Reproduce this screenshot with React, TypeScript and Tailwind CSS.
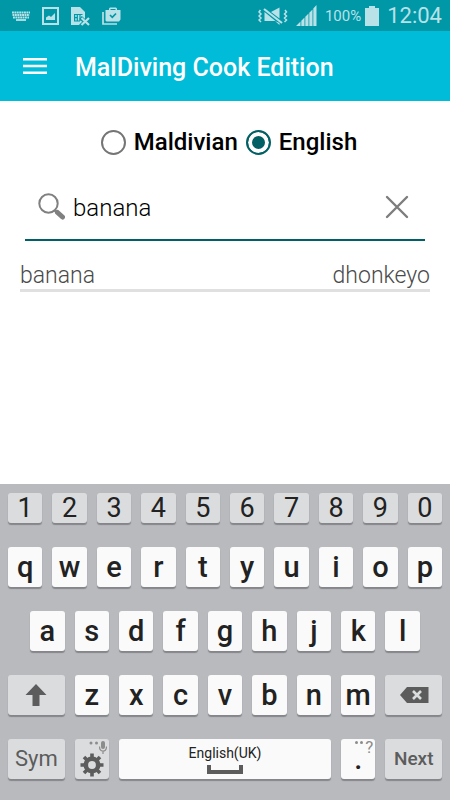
import React, { useState } from 'react';

type Language = 'maldivian' | 'english';

const DICTIONARY = [{ english: 'banana', maldivian: 'dhonkeyo' }];

const LANGUAGES: { id: Language; label: string }[] = [
  { id: 'maldivian', label: 'Maldivian' },
  { id: 'english', label: 'English' },
];

const NUMBER_KEYS = ['1', '2', '3', '4', '5', '6', '7', '8', '9', '0'];
const TOP_KEYS = ['q', 'w', 'e', 'r', 't', 'y', 'u', 'i', 'o', 'p'];
const HOME_KEYS = ['a', 's', 'd', 'f', 'g', 'h', 'j', 'k', 'l'];
const BOTTOM_KEYS = ['z', 'x', 'c', 'v', 'b', 'n', 'm'];

const StatusBar: React.FC = () => (
  <div className="flex h-[31px] items-center justify-between bg-[#0097a7] pl-3 pr-2 text-[#b8e2e7]">
    <div className="flex items-center gap-3">
      {/* Keyboard */}
      <svg className="h-[10px] w-[18px]" viewBox="0 0 18 10" fill="none" stroke="currentColor">
        <path d="M0 1.500h18M0.500 4h17M1 6.500h16" strokeWidth="1.900" strokeDasharray="1.900 0.500" />
        <path d="M4 9h10" strokeWidth="1.800" />
      </svg>
      {/* Screenshot */}
      <svg className="h-[18px] w-[17px]" viewBox="0 0 17 18">
        <path fill="currentColor" fillRule="evenodd" d="M0 0h17v18H0zM2 2v14h13V2z" />
        <path fill="currentColor" d="M4 13V10.500l3-2 2 1.500 4-4v7z" />
      </svg>
      {/* SIM missing */}
      <svg className="h-[20px] w-[19px]" viewBox="0 0 19 20">
        <path fill="currentColor" d="M0 1h9l5 5v13H0z" />
        <path fill="none" stroke="#0097a7" strokeWidth="1.200" d="M3 8.500h8.500M3.600 8v7.500M3 15h6M6.300 8v7M9 8v7M3 11.700h3" />
        <path fill="none" stroke="#0097a7" strokeWidth="4" d="M9.500 11.500l9 8.500M19 11.500l-9.500 8.500" />
        <path fill="none" stroke="currentColor" strokeWidth="2.200" d="M10.500 12l7.500 7M18 12l-7.500 7" />
      </svg>
      {/* Installed apps */}
      <svg className="h-[18px] w-[19px]" viewBox="0 0 19 18">
        <path fill="none" stroke="currentColor" strokeWidth="1.700" d="M1 5v12h14" />
        <path fill="currentColor" fillRule="evenodd" d="M3.500 3H7V1.500L8 .5h6l1 1V3h3.500v9.500l-1.500 2H4.500l-1-1zM8.500 2v1h5V2z" />
        <path fill="none" stroke="#0097a7" strokeWidth="1.700" d="M8 8l2.300 2.300L14 6.500" />
      </svg>
    </div>
    <div className="flex items-center">
      {/* Sound muted, vibrating */}
      <svg className="mr-2 h-[20px] w-[30px]" viewBox="0 0 30 20" fill="none" stroke="currentColor">
        <path d="M2.500 4L1 6l2 2-2 2 2 2-2 2 2 2M27 4l1.500 2-2 2 2 2-2 2 2 2-2 2" strokeWidth="1.500" />
        <path fill="currentColor" stroke="none" d="M6.500 6l11 9h-11zM13 6L21.500 1.500v11zM17 15l4.500 4V17z" />
        <path d="M6 3l18 14" strokeWidth="2.200" />
      </svg>
      {/* Signal */}
      <svg className="mr-2 h-[21px] w-[21px]" viewBox="0 0 21 21" fill="currentColor">
        <path d="M0 21l4.500-4.500V21zM5.300 15.700l3.200-3.200V21H5.300zM9.300 11.700l3.200-3.200V21H9.300zM13.300 7.700l3.200-3.200V21h-3.200zM17.300 3.500L20.500 0v21h-3.200z" />
      </svg>
      <span className="text-[15px] leading-5">100%</span>
      <svg className="ml-1 h-[20px] w-[14px]" viewBox="0 0 14 20" fill="currentColor">
        <path d="M4 0h6v2h4v18H0V2h4z" />
      </svg>
      <span className="ml-2 text-[22px] leading-7">12:04</span>
    </div>
  </div>
);

interface KeyProps {
  label: string;
  className?: string;
  children?: React.ReactNode;
  onPress?: () => void;
}

const Key: React.FC<KeyProps> = ({ label, className = 'col-span-2 h-10 bg-[#fafafa] text-[29px] font-medium', children, onPress }) => (
  <button
    type="button"
    aria-label={label}
    onClick={onPress}
    className={`relative flex items-center justify-center rounded-[3px] leading-8 text-[#222] shadow-[0_2px_1px_#85868a] active:brightness-90 ${className}`}
  >
    {children ?? label}
  </button>
);

interface KeyboardProps {
  onType: (char: string) => void;
  onDelete: () => void;
}

const Keyboard: React.FC<KeyboardProps> = ({ onType, onDelete }) => (
  <div className="mt-auto flex flex-col gap-6 bg-[#b9babe] px-2 pb-[21px] pt-[9px]">
    <div className="grid grid-cols-20 gap-[10px]">
      {NUMBER_KEYS.map(key => (
        <Key key={key} label={key} onPress={() => onType(key)} className="col-span-2 h-[30px] bg-[#dbdcde] text-[27px]" />
      ))}
    </div>
    <div className="grid grid-cols-20 gap-[10px]">
      {TOP_KEYS.map(key => (
        <Key key={key} label={key} onPress={() => onType(key)} />
      ))}
    </div>
    <div className="grid grid-cols-20 gap-[10px]">
      {/* Half a key in from the edge */}
      <span />
      {HOME_KEYS.map(key => (
        <Key key={key} label={key} onPress={() => onType(key)} />
      ))}
    </div>
    <div className="grid grid-cols-20 gap-[10px]">
      <Key label="Shift" className="col-span-3 h-10 bg-[#dbdcde]">
        <svg className="h-6 w-[22px]" viewBox="0 0 22 24" fill="#5c5c5c">
          <path d="M11 1l10.500 11h-7v11h-7V12h-7z" />
        </svg>
      </Key>
      {BOTTOM_KEYS.map(key => (
        <Key key={key} label={key} onPress={() => onType(key)} />
      ))}
      <Key label="Delete" onPress={onDelete} className="col-span-3 h-10 bg-[#dbdcde]">
        <svg className="h-4 w-[30px]" viewBox="0 0 30 16">
          <path fill="#5c5c5c" d="M1 8l7-8h21.500v16H8z" />
          <path fill="none" stroke="#dbdcde" strokeWidth="2.600" d="M14 4l8 8M22 4l-8 8" />
        </svg>
      </Key>
    </div>
    <div className="grid grid-cols-20 gap-[10px]">
      <Key label="Sym" className="col-span-3 h-10 bg-[#dbdcde]">
        <span className="text-[22px] text-[#5c5c5c]">Sym</span>
      </Key>
      <Key label="Settings" className="col-span-2 h-10 bg-[#dbdcde]">
        <svg className="absolute right-[2px] top-[2px] h-[13px] w-[18px]" viewBox="0 0 18 13">
          <circle cx="2" cy="2" r="1.500" fill="#8c8c8c" />
          <circle cx="7.500" cy="2" r="1.500" fill="#8c8c8c" />
          <rect x="12" y="0" width="4" height="8" rx="2" fill="#8c8c8c" />
          <path d="M10.500 5.500c0 6 7 6 7 0M14 10v3" fill="none" stroke="#8c8c8c" strokeWidth="1.200" />
        </svg>
        <svg className="mt-3 h-6 w-6" viewBox="-12 -12 24 24">
          <circle r="6.200" fill="none" stroke="#5c5c5c" strokeWidth="4.600" />
          <path
            d="M0-11.500v4M0 11.500v-4M-11.500 0h4M11.500 0h-4M-8-8l3 3M8 8l-3-3M8-8l-3 3M-8 8l3-3"
            fill="none"
            stroke="#5c5c5c"
            strokeWidth="3.600"
          />
        </svg>
      </Key>
      <Key label="Space" onPress={() => onType(' ')} className="col-span-10 h-10 flex-col bg-[#fafafa]">
        <span className="text-[14px] leading-4">English(UK)</span>
        <svg className="mt-1 h-[9px] w-9" viewBox="0 0 36 9">
          <path d="M2 0v7h32V0" fill="none" stroke="#5c5c5c" strokeWidth="4" />
        </svg>
      </Key>
      <Key label="Full stop" onPress={() => onType('.')} className="col-span-2 h-10 bg-[#fafafa] text-[29px] font-medium">
        <span className="absolute right-[2px] top-0 flex items-start gap-[2px] text-[17px] font-normal leading-4 text-[#8c8c8c]">
          <span className="mt-[2px] h-[3px] w-[3px] rounded-full bg-[#8c8c8c]" />
          <span className="mt-[2px] h-[3px] w-[3px] rounded-full bg-[#8c8c8c]" />
          <span>?</span>
        </span>
        <span>.</span>
      </Key>
      <Key label="Next" className="col-span-3 h-10 bg-[#dbdcde]">
        <span className="text-[19px] font-medium text-[#5c5c5c]">Next</span>
      </Key>
    </div>
  </div>
);

export default function App() {
  const [language, setLanguage] = useState<Language>('english');
  const [query, setQuery] = useState('banana');

  const results = query ? DICTIONARY.filter(entry => entry[language].startsWith(query)) : [];

  return (
    <div className="flex min-h-screen flex-col bg-white font-['Roboto',sans-serif]">
      <StatusBar />
      <header className="flex h-[70px] items-center gap-7 bg-[#00bcd8] px-[23px] pt-1 text-white">
        <button type="button" aria-label="Open menu" className="pb-1">
          <svg className="h-4 w-6" viewBox="0 0 24 16" fill="currentColor">
            <path d="M0 0h24v2.600H0zM0 6.700h24v2.600H0zM0 13.400h24V16H0z" />
          </svg>
        </button>
        <h1 className="text-[25px] font-medium leading-8">MalDiving Cook Edition</h1>
      </header>

      <main className="px-5">
        <div className="flex justify-center gap-2 pl-2 pt-[25px]">
          {LANGUAGES.map(({ id, label }) => (
            <label key={id} className="flex items-center gap-2 text-[24px] font-medium leading-8 text-black">
              <input
                type="radio"
                name="language"
                checked={language === id}
                onChange={() => setLanguage(id)}
                className="h-[25px] w-[25px] appearance-none rounded-full border-2 border-[#757575] bg-white checked:border-[#006064] checked:bg-[#006064] checked:shadow-[inset_0_0_0_4px_white]"
              />
              {label}
            </label>
          ))}
        </div>

        <div className="mx-[5px] mt-4 flex h-[67px] items-center border-b-2 border-[#00606a] pl-3 pr-4">
          <svg className="h-7 w-7" viewBox="0 0 28 28" fill="none" stroke="#808080">
            <circle cx="11.500" cy="10.500" r="9.200" strokeWidth="2" />
            <path d="M17.500 17l3 3" strokeWidth="2.500" />
            <path d="M20.500 19.500l5 4.500" strokeWidth="5" strokeLinecap="round" />
          </svg>
          <input
            type="text"
            aria-label="Search word"
            value={query}
            onChange={e => setQuery(e.target.value)}
            className="ml-2 min-w-0 flex-1 bg-transparent pt-[2px] text-[24px] font-light leading-8 text-black outline-none"
          />
          <button type="button" aria-label="Clear search" onClick={() => setQuery('')}>
            <svg className="h-6 w-6" viewBox="0 0 24 24" fill="none" stroke="#7d7d7d" strokeWidth="2.400" strokeLinecap="round">
              <path d="M2 2l20 20M22 2L2 22" />
            </svg>
          </button>
        </div>

        <ul className="mt-5">
          {results.map(entry => (
            <li
              key={entry.english}
              className="flex justify-between border-b-[3px] border-[#e0e0e0] pt-[2px] text-[23px] font-light leading-[26px] text-[#4a4a4a]"
            >
              <span>{language === 'english' ? entry.english : entry.maldivian}</span>
              <span>{language === 'english' ? entry.maldivian : entry.english}</span>
            </li>
          ))}
        </ul>
      </main>

      <Keyboard onType={char => setQuery(prev => prev + char)} onDelete={() => setQuery(prev => prev.slice(0, -1))} />
    </div>
  );
}
